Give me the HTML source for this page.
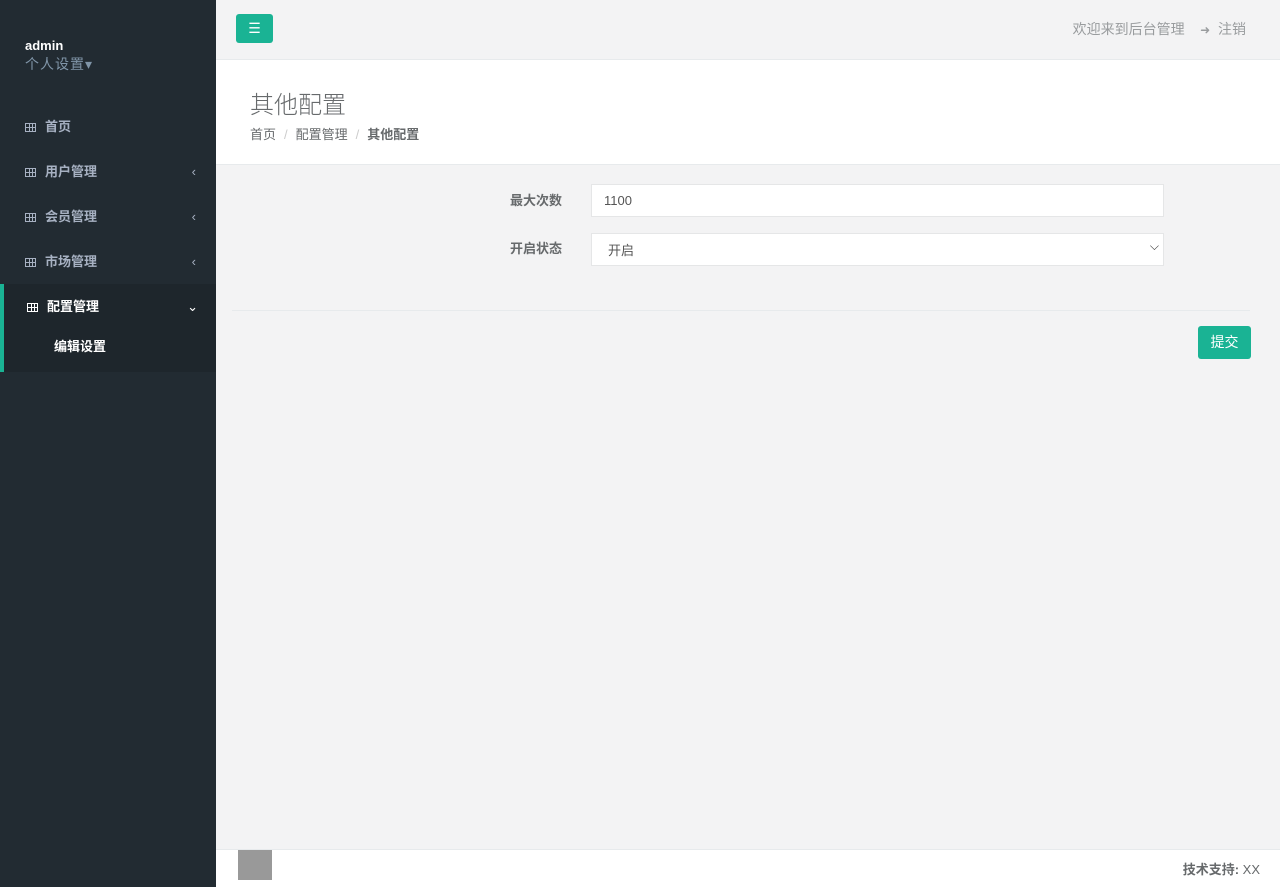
<!DOCTYPE html>
<html><head><meta charset="utf-8"><style>
*{box-sizing:border-box;margin:0;padding:0}
body{width:1280px;height:887px;overflow:hidden;background:#f3f3f4;font-family:"Liberation Sans","Noto Sans CJK SC",sans-serif;font-size:13px;color:#676a6c;position:relative}
.side{position:absolute;left:0;top:0;width:216px;height:887px;background:#222b32}
.side .u{position:absolute;left:25px;top:38px;color:#fff;font-weight:bold;font-size:13px}
.side .s{position:absolute;left:25px;top:54px;color:#8095a8;font-size:14px;letter-spacing:1px}
.nav{position:absolute;top:104px;left:0;width:216px}
.nav .i{height:45px;line-height:45px;padding-left:25px;color:#a7b1c2;font-weight:bold;position:relative}
.nav .i .ic{display:inline-block;width:11px;height:9px;border:1px solid #a7b1c2;margin-right:9px;vertical-align:-1px;background:linear-gradient(90deg,transparent 3px,#a7b1c2 3px,#a7b1c2 4px,transparent 4px,transparent 6px,#a7b1c2 6px,#a7b1c2 7px,transparent 7px),linear-gradient(transparent 3px,#a7b1c2 3px,#a7b1c2 4px,transparent 4px)}
.nav .i .ar{position:absolute;right:20px;top:0;font-weight:normal}
.act{background:#1e262c;border-left:4px solid #1ab394;height:88px}
.act .i{color:#fff;padding-left:23px}
.act .i .ic{border-color:#fff;background:linear-gradient(90deg,transparent 3px,#fff 3px,#fff 4px,transparent 4px,transparent 6px,#fff 6px,#fff 7px,transparent 7px),linear-gradient(transparent 3px,#fff 3px,#fff 4px,transparent 4px)}
.act .sub{color:#fff;font-weight:bold;padding-left:50px;line-height:20px;margin-top:8px}
.top{position:absolute;left:216px;top:0;right:0;height:60px;border-bottom:1px solid #e7eaec}
.btn{position:absolute;left:20px;top:14px;width:37px;height:29px;background:#1ab394;border-radius:3px;color:#fff;text-align:center;line-height:28px;font-size:14px}
.tr{position:absolute;right:34px;top:19px;font-size:14px;color:#999c9e}
.head{position:absolute;left:216px;top:60px;right:0;height:105px;background:#fff;border-bottom:1px solid #e7eaec}
.head h2{position:absolute;left:34px;top:25px;font-size:24px;font-weight:300;color:#676a6c}
.bc{position:absolute;left:34px;top:64px;font-size:13px}
.bc span{color:#ccc;margin:0 8px}
.lab{position:absolute;left:510px;font-weight:bold;font-size:13px;color:#676a6c}
.inp{position:absolute;left:591px;width:573px;height:33px;background:#fff;border:1px solid #e5e6e7;padding:8px 12px;font-size:13px;color:#555}
.hr{position:absolute;left:232px;right:30px;top:310px;border-top:1px solid #e7eaec}
.sb{position:absolute;left:1198px;top:326px;width:53px;height:33px;background:#1ab394;border-radius:3px;color:#fff;text-align:center;line-height:33px;font-size:14px}
.foot{position:absolute;left:216px;right:0;top:849px;height:38px;background:#fff;border-top:1px solid #e7eaec}
.foot div{position:absolute;right:20px;top:9px;font-size:13px}
</style></head><body>
<div class="side">
<div class="u">admin</div><div class="s">个人设置▾</div>
<div class="nav">
<div class="i"><span class="ic"></span>首页</div>
<div class="i"><span class="ic"></span>用户管理<span class="ar">‹</span></div>
<div class="i"><span class="ic"></span>会员管理<span class="ar">‹</span></div>
<div class="i"><span class="ic"></span>市场管理<span class="ar">‹</span></div>
<div class="act"><div class="i"><span class="ic"></span>配置管理<span class="ar" style="right:18px">⌄</span></div><div class="sub">编辑设置</div></div>
</div></div>
<div class="top"><div class="btn">☰</div><div class="tr">欢迎来到后台管理 &nbsp;&nbsp; <span style="font-size:12px">➜</span>&nbsp; 注销</div></div>
<div class="head"><h2>其他配置</h2><div class="bc">首页<span>/</span>配置管理<span>/</span><b>其他配置</b></div></div>
<div class="lab" style="top:190px">最大次数</div><div class="inp" style="top:184px">1100</div>
<div class="lab" style="top:238px">开启状态</div><div class="inp" style="top:233px;padding:6px 16px">开启<span style="position:absolute;right:4px;top:5px;font-size:12px;color:#333">⌵</span></div>
<div class="hr"></div>
<div class="sb">提交</div>
<div class="foot"><div><b>技术支持:</b> XX</div></div>
<div style="position:absolute;left:238px;top:850px;width:34px;height:30px;background:#999"></div>
</body></html>
